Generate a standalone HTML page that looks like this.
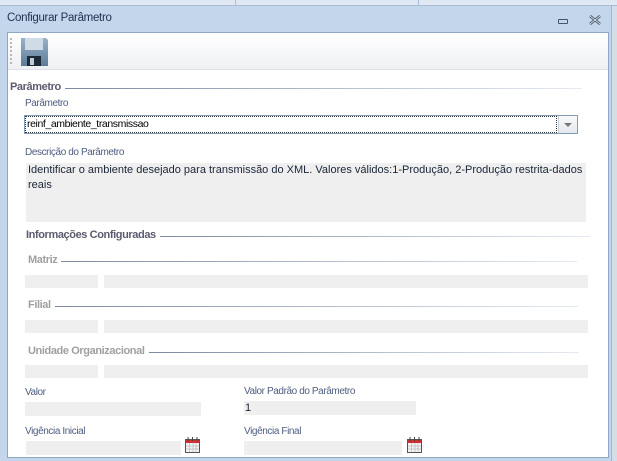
<!DOCTYPE html>
<html><head><meta charset="utf-8"><style>
*{margin:0;padding:0;box-sizing:border-box}
body{width:617px;height:461px;overflow:hidden;background:#c4d6ec;font-family:"Liberation Sans",sans-serif;font-size:11px;position:relative}
.a{position:absolute}
.top{left:0;top:0;width:617px;height:6px;background:#dfe8f3;border-bottom:1px solid #a9bdd6}
.title{left:7px;top:12px;color:#1e3050;font-size:11.5px;letter-spacing:-0.3px}
.panel{left:7px;top:32px;width:602px;height:426px;background:#fff;border:1px solid #8fa6c4}
.tb{left:8px;top:33px;width:600px;height:37px;background:linear-gradient(#fff,#eef0f3);border-bottom:1px solid #dde2ea}
.row{display:flex;align-items:center;height:14px}
.row i{flex:1;height:1px;margin-left:4px;margin-top:2px;background:linear-gradient(90deg,#7b8aa2,#e6ebf2)}
.h{font-weight:bold;color:#5b5b70;font-size:11px;letter-spacing:-0.4px}
.g{font-weight:bold;color:#a0a0a0;font-size:11px;letter-spacing:-0.4px}
.lb{color:#4e5d80;font-size:10px;letter-spacing:-0.4px}
.box{background:#efefef}
</style></head><body>
<div class="a top"></div>
<div class="a" style="left:235px;top:0;width:1px;height:6px;background:#a9bdd6"></div>
<div class="a" style="left:418px;top:0;width:1px;height:6px;background:#a9bdd6"></div>
<div class="a" style="left:611px;top:6px;width:6px;height:455px;background:#d4dde8;border-left:1px solid #a7b5c6"></div>
<div class="a title">Configurar Parâmetro</div>
<div class="a" style="left:558px;top:19px;width:10px;height:5px;border:1px solid #44556e;border-radius:1px"></div>
<svg class="a" style="left:589px;top:15px" width="12" height="10" viewBox="0 0 12 10"><path d="M1 1l10 8M11 1L1 9" stroke="#44556e" stroke-width="2.6"/><path d="M1 1l10 8M11 1L1 9" stroke="#fff" stroke-width="0.8"/></svg>
<div class="a panel"></div>
<div class="a tb"></div>
<div class="a" style="left:10px;top:38px;width:2px;height:26px;border-left:2px dotted #b8b8b8"></div>
<svg class="a" style="left:20px;top:37px" width="29" height="30" viewBox="0 0 29 30">
<defs><linearGradient id="f" x1="0" y1="0" x2="0" y2="1"><stop offset="0" stop-color="#9ab2c8"/><stop offset="1" stop-color="#5e7c98"/></linearGradient></defs>
<path d="M1 1h25l2 2v26H1z" fill="url(#f)"/>
<rect x="5" y="1" width="18" height="12" fill="#cfdbe6"/>
<rect x="7" y="19" width="14" height="10" fill="#1c2a38"/>
<rect x="10" y="21" width="4" height="7" fill="#c0ccd8"/>
</svg>
<div class="a row h" style="left:10px;top:80px;width:572px">Parâmetro<i></i></div>
<div class="a lb" style="left:25px;top:98px">Parâmetro</div>
<div class="a" style="left:24px;top:115px;width:554px;height:19px;border:1px solid #7f9db9;background:#fff"></div>
<div class="a" style="left:25px;top:116px;width:532px;height:17px;border:1px dotted #333"></div>
<div class="a" style="left:27px;top:118px;color:#000;font-size:10.5px;letter-spacing:-0.4px">reinf_ambiente_transmissao</div>
<div class="a" style="left:558px;top:116px;width:19px;height:17px;background:linear-gradient(#fafafa,#e4e8ee);border-left:1px solid #c8d0da"></div>
<div class="a" style="left:564px;top:123px;border-left:4px solid transparent;border-right:4px solid transparent;border-top:4px solid #777"></div>
<div class="a lb" style="left:25px;top:147px">Descrição do Parâmetro</div>
<div class="a box" style="left:26px;top:163px;width:560px;height:59px"></div>
<div class="a" style="left:28px;top:163px;width:555px;line-height:15px;color:#1a2538;font-size:11px">Identificar o ambiente desejado para transmissão do XML. Valores válidos:1-Produção, 2-Produção restrita-dados reais</div>
<div class="a row h" style="left:26px;top:228px;width:564px">Informações Configuradas<i></i></div>
<div class="a row g" style="left:28px;top:253px;width:549px">Matriz<i></i></div>
<div class="a box" style="left:25px;top:275px;width:73px;height:13px"></div>
<div class="a box" style="left:104px;top:275px;width:484px;height:13px"></div>
<div class="a row g" style="left:28px;top:298px;width:550px">Filial<i></i></div>
<div class="a box" style="left:25px;top:320px;width:73px;height:13px"></div>
<div class="a box" style="left:104px;top:320px;width:484px;height:13px"></div>
<div class="a row g" style="left:28px;top:344px;width:551px">Unidade Organizacional<i></i></div>
<div class="a box" style="left:25px;top:365px;width:73px;height:13px"></div>
<div class="a box" style="left:104px;top:365px;width:484px;height:13px"></div>
<div class="a lb" style="left:25px;top:387px">Valor</div>
<div class="a box" style="left:25px;top:402px;width:176px;height:14px"></div>
<div class="a lb" style="left:244px;top:386px">Valor Padrão do Parâmetro</div>
<div class="a box" style="left:244px;top:401px;width:172px;height:14px"></div>
<div class="a" style="left:245px;top:402px;color:#1a2538">1</div>
<div class="a lb" style="left:25px;top:426px">Vigência Inicial</div>
<div class="a box" style="left:26px;top:441px;width:155px;height:14px"></div>
<div class="a lb" style="left:244px;top:426px">Vigência Final</div>
<div class="a box" style="left:244px;top:441px;width:158px;height:14px"></div>
<svg class="a" style="left:185px;top:437px" width="15" height="16" viewBox="0 0 15 16"><rect x="0.5" y="2.5" width="14" height="13" fill="#f4f4f4" stroke="#555"/><rect x="1" y="3" width="13" height="3" fill="#d03030"/><path d="M3 0v4M7.5 0v4M12 0v4" stroke="#444"/><path d="M1 9h13M1 12h13M4.5 6v9M8 6v9M11 6v9" stroke="#bbb" stroke-width=".7"/></svg>
<svg class="a" style="left:407px;top:437px" width="15" height="16" viewBox="0 0 15 16"><rect x="0.5" y="2.5" width="14" height="13" fill="#f4f4f4" stroke="#555"/><rect x="1" y="3" width="13" height="3" fill="#d03030"/><path d="M3 0v4M7.5 0v4M12 0v4" stroke="#444"/><path d="M1 9h13M1 12h13M4.5 6v9M8 6v9M11 6v9" stroke="#bbb" stroke-width=".7"/></svg>
</body></html>
